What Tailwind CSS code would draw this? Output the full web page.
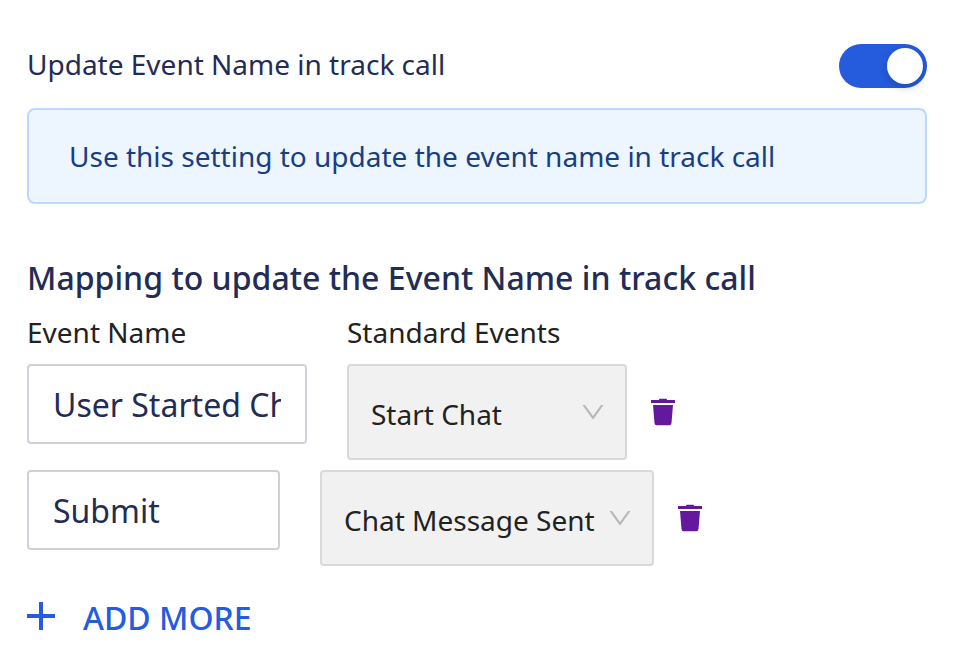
<!DOCTYPE html>
<html lang="en">
<head>
<meta charset="utf-8">
<title>Event mapping</title>
<script src="https://cdn.jsdelivr.net/npm/@tailwindcss/browser@4"></script>
</head>
<body class="bg-white font-['Noto_Sans',sans-serif] text-[28px] leading-[44px] text-[#222222]">
<svg class="hidden">
  <symbol id="trash" viewBox="0 0 24 28">
    <path d="M8 2Q8 .7 9 .7h6q1 0 1 1.300H24v3H0V2zM2 7h20l-1.500 18Q20.200 27.200 18.500 27.200h-13Q3.800 27.200 3.500 25z"/>
  </symbol>
  <symbol id="down" viewBox="0 0 1024 1024">
    <path d="M884 256h-75c-5.100 0-9.900 2.500-12.900 6.600L512 654.200 227.900 262.600c-3-4.100-7.800-6.600-12.900-6.600h-75c-6.500 0-10.300 7.400-6.500 12.700l352.600 486.100c12.800 17.600 39 17.600 51.700 0l352.600-486.100c3.900-5.300.1-12.700-6.400-12.700z"/>
  </symbol>
</svg>
<main class="w-[957px] h-[655px] overflow-hidden pl-[27px] pr-[30px] pt-11 whitespace-nowrap">
  <div class="flex items-center justify-between h-11">
    <span class="pb-1 text-[#232c55]">Update Event Name in track call</span>
    <button class="w-[88px] h-11 rounded-full bg-[#255bdd] p-1 flex justify-end">
      <span class="size-9 rounded-full bg-white shadow-[0_4px_8px_rgba(0,35,11,0.2)]"></span>
    </button>
  </div>
  <div class="mt-5 h-24 rounded-lg border-2 border-[#bbd8fe] bg-[#edf5ff] pl-10 flex items-center text-[#173f82]">Use this setting to update the event name in track call</div>
  <h2 class="mt-[52px] h-11 text-[32px] font-medium tracking-[0.02px] text-[#232c55]">Mapping to update the Event Name in track call</h2>
  <div class="flex mt-[10px] h-11">
    <span class="w-[320px]">Event Name</span>
    <span>Standard Events</span>
  </div>
  <div class="flex items-start mt-[10px] h-24">
    <div class="w-[280px] h-20 rounded border-2 border-[#cdd2d9] px-6 pt-0.5 flex items-center text-[32px] text-[#232c55]"><span class="flex-1 overflow-hidden">User Started Chat</span></div>
    <div class="ml-10 w-[280px] h-24 rounded border-2 border-[#d9d9d9] bg-[#f1f1f1] pl-[22px] pr-[18px] pt-1 flex items-center justify-between">
      <span>Start Chat</span>
      <svg class="size-[28px] -mt-1 fill-[#b8b8b8]"><use href="#down"/></svg>
    </div>
    <svg class="ml-6 mt-[34px] w-6 h-7 fill-[#64189e]"><use href="#trash"/></svg>
  </div>
  <div class="flex items-start mt-2.5 h-24">
    <div class="w-[253px] h-20 rounded border-2 border-[#cdd2d9] px-6 pt-0.5 flex items-center text-[32px] text-[#232c55]"><span>Submit</span></div>
    <div class="ml-10 w-[334px] h-24 rounded border-2 border-[#d9d9d9] bg-[#f1f1f1] pl-[22px] pr-[18px] pt-1 flex items-center justify-between">
      <span>Chat Message Sent</span>
      <svg class="size-[28px] -mt-1 fill-[#b8b8b8]"><use href="#down"/></svg>
    </div>
    <svg class="ml-6 mt-[34px] w-6 h-7 fill-[#64189e]"><use href="#trash"/></svg>
  </div>
  <button class="flex items-start mt-[30px] h-11 text-[32px] font-medium text-[#255bdd]">
    <svg class="mt-1.5 size-7" fill="none" stroke="currentColor" stroke-width="4"><path d="M14 0v28M0 14h28"/></svg>
    <span class="ml-7">ADD MORE</span>
  </button>
</main>
</body>
</html>
